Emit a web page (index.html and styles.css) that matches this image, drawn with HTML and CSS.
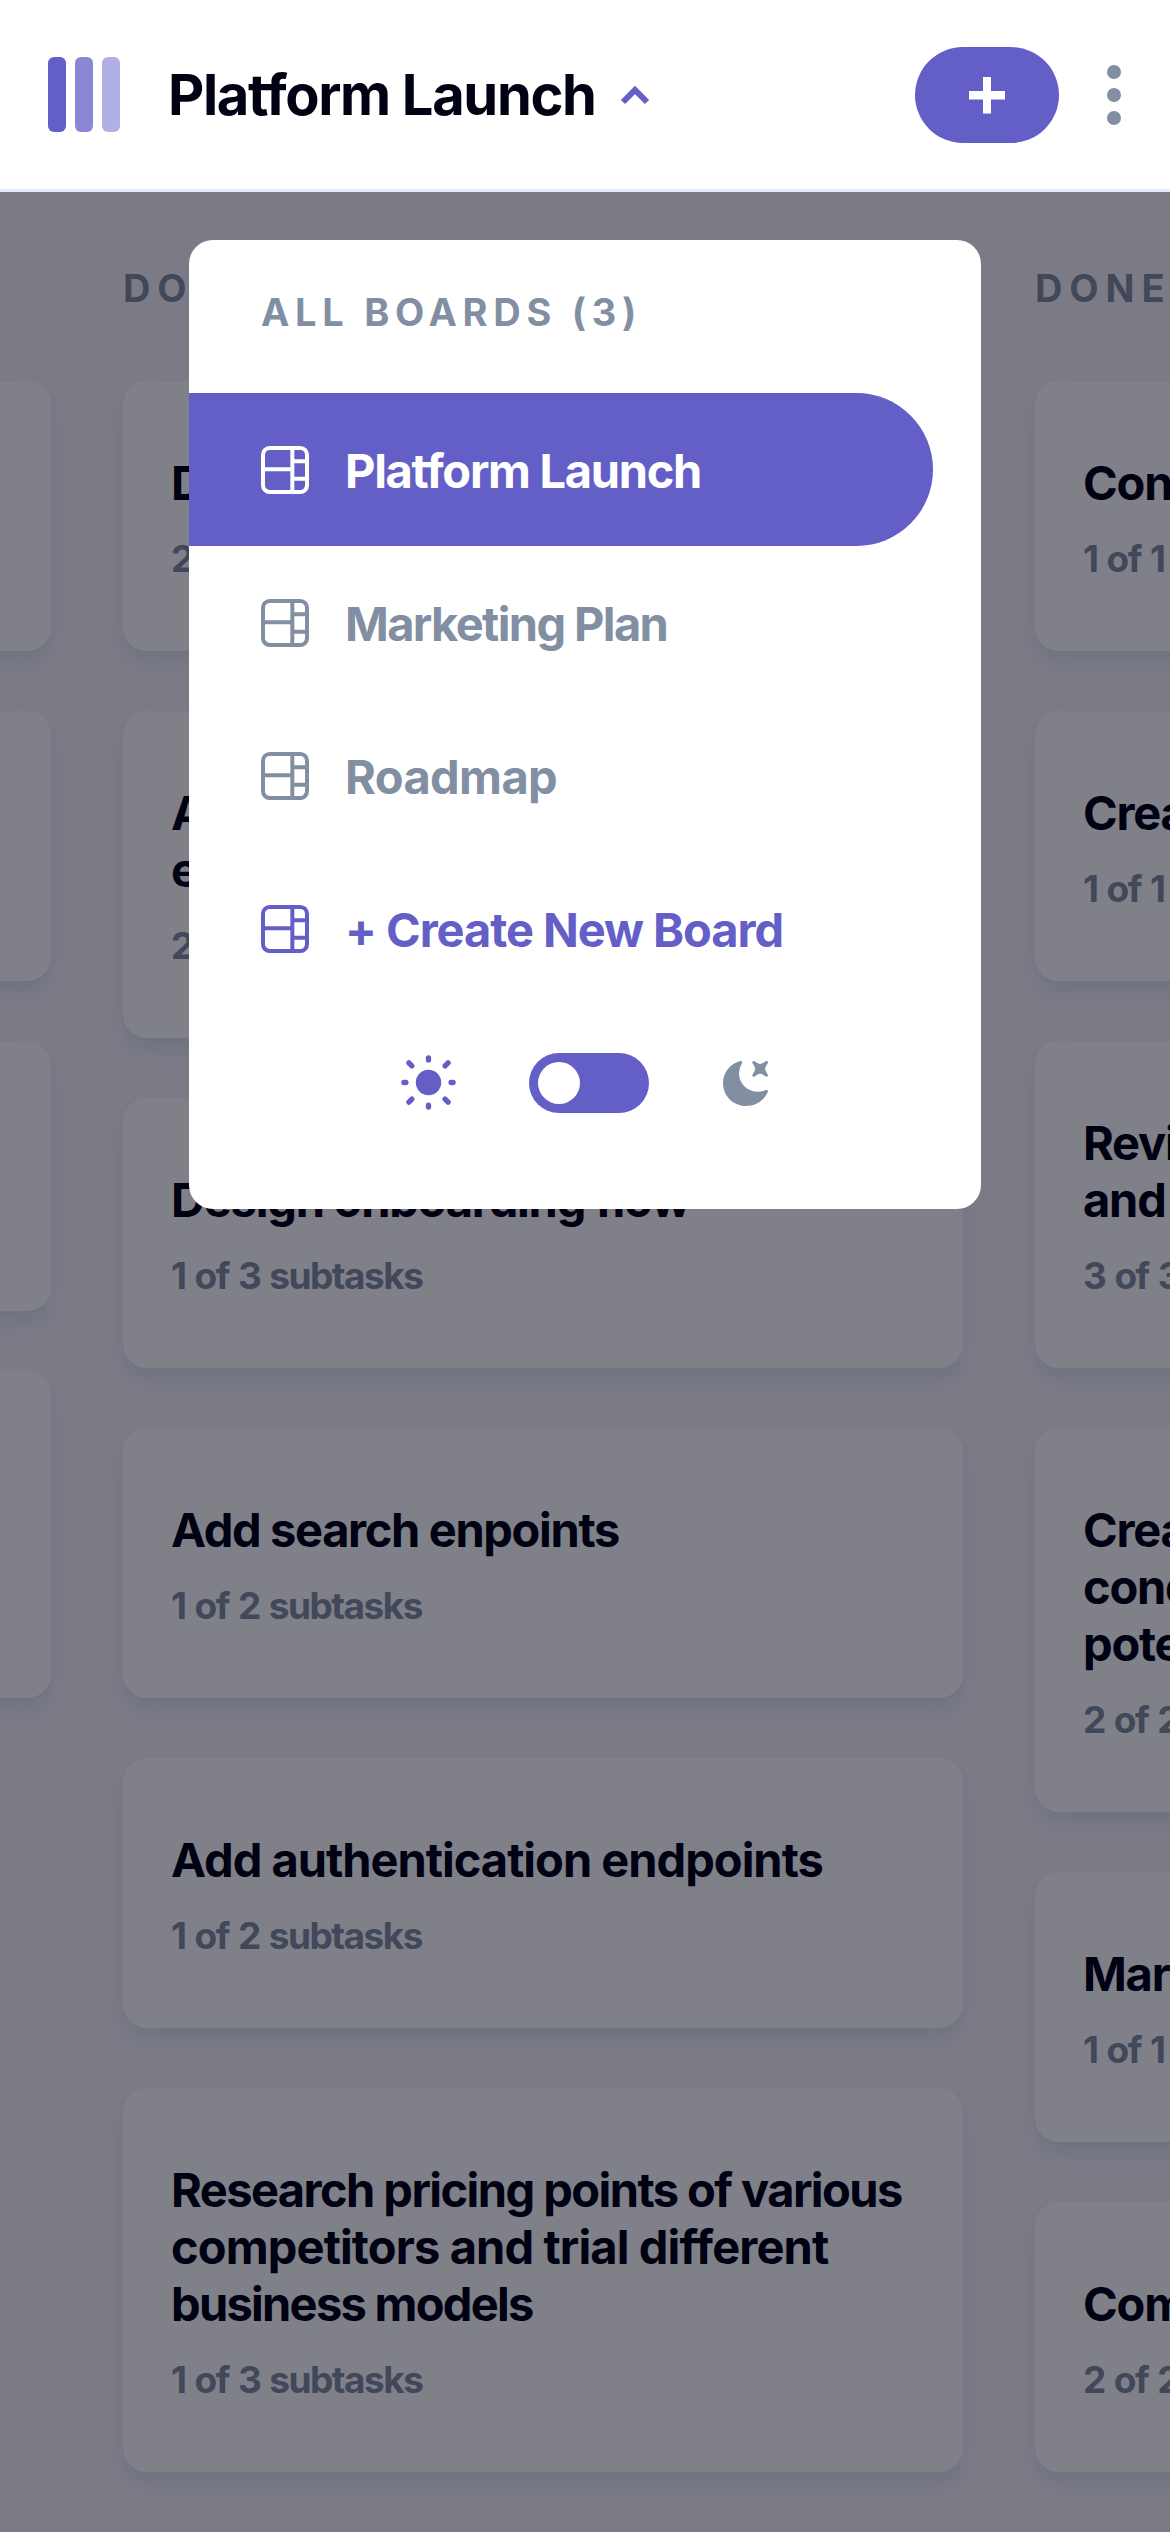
FILE: index.html
```html
<!DOCTYPE html>
<html lang="en">
<head>
<meta charset="utf-8">
<title>Platform Launch</title>
<link rel="stylesheet" href="styles.css">
</head>
<body>
<svg class="sprite" width="0" height="0">
  <symbol id="board-icon" viewBox="0 0 16 16"><path fill="currentColor" d="M0 2.889A2.889 2.889 0 0 1 2.889 0H13.11A2.889 2.889 0 0 1 16 2.889V13.11A2.888 2.888 0 0 1 13.111 16H2.89A2.889 2.889 0 0 1 0 13.111V2.89Zm1.333 5.555v4.667c0 .859.697 1.556 1.556 1.556h6.889V8.444H1.333Zm8.445-1.333V1.333h-6.89A1.556 1.556 0 0 0 1.334 2.89V7.11h8.445Zm4.889-1.333H11.11v4.444h3.556V5.778Zm0 5.778H11.11v3.11h2a1.556 1.556 0 0 0 1.556-1.555v-1.555Zm0-7.112V2.89a1.555 1.555 0 0 0-1.556-1.556h-2v3.111h3.556Z"/></symbol>
</svg>
<div class="app">
  <header class="header">
    <div class="logo"><i class="bar"></i><i class="bar bar-mid"></i><i class="bar bar-light"></i></div>
    <h1 class="title">Platform Launch</h1>
    <svg class="chevron" viewBox="0 0 10 7"><path d="M9 6 5 2 1 6" fill="none" stroke="#635FC7" stroke-width="2"/></svg>
    <button class="add" aria-label="Add task"><svg class="plus" viewBox="0 0 36 36"><path fill="#fff" d="M14 0h8v14h14v8.500H22V36.500h-8V22.500H0V14h14z"/></svg></button>
    <svg class="dots" viewBox="0 0 14 60"><g fill="#828FA3"><circle cx="7" cy="7" r="7"/><circle cx="7" cy="30" r="7"/><circle cx="7" cy="53" r="7"/></g></svg>
  </header>

  <main class="board">
    <section class="column">
      <h2 class="label"></h2>
      <article class="card short"></article>
      <article class="card short"></article>
      <article class="card short"></article>
      <article class="card tall"></article>
    </section>
    <section class="column">
      <h2 class="label">DOING (6)</h2>
      <article class="card"><h3 class="name">Design settings screen</h3><p class="sub">2 of 3 subtasks</p></article>
      <article class="card"><h3 class="name">Add account management<br>endpoints</h3><p class="sub">2 of 3 subtasks</p></article>
      <article class="card"><h3 class="name">Design onboarding flow</h3><p class="sub">1 of 3 subtasks</p></article>
      <article class="card"><h3 class="name tight">Add search enpoints</h3><p class="sub">1 of 2 subtasks</p></article>
      <article class="card"><h3 class="name loose">Add authentication endpoints</h3><p class="sub">1 of 2 subtasks</p></article>
      <article class="card"><h3 class="name"><span class="tighter">Research pricing points of various</span><br><span class="looser">competitors and trial different</span><br><span class="tightest">business models</span></h3><p class="sub">1 of 3 subtasks</p></article>
    </section>
    <section class="column">
      <h2 class="label">DONE (7)</h2>
      <article class="card"><h3 class="name">Conduct 5 wireframe tests</h3><p class="sub">1 of 1 subtasks</p></article>
      <article class="card"><h3 class="name">Create wireframe prototype</h3><p class="sub">1 of 1 subtasks</p></article>
      <article class="card"><h3 class="name">Review results of usability tests<br>and iterate</h3><p class="sub">3 of 3 subtasks</p></article>
      <article class="card"><h3 class="name">Create paper prototypes and<br>conduct 10 usability tests with<br>potential customers</h3><p class="sub">2 of 2 subtasks</p></article>
      <article class="card"><h3 class="name">Market discovery</h3><p class="sub">1 of 1 subtasks</p></article>
      <article class="card"><h3 class="name">Competitor analysis</h3><p class="sub">2 of 2 subtasks</p></article>
    </section>
  </main>

  <div class="overlay"></div>

  <nav class="menu">
    <h2 class="menu-label">ALL BOARDS (3)</h2>
    <a class="item active"><svg class="icon"><use href="#board-icon"/></svg><span class="text launch">Platform Launch</span></a>
    <a class="item"><svg class="icon"><use href="#board-icon"/></svg><span class="text marketing">Marketing Plan</span></a>
    <a class="item"><svg class="icon"><use href="#board-icon"/></svg><span class="text roadmap">Roadmap</span></a>
    <a class="item create"><svg class="icon"><use href="#board-icon"/></svg><span class="text new">+ Create New Board</span></a>
    <div class="theme">
      <svg class="sun" viewBox="-27.500 -27.500 55 55"><circle r="12.700" fill="#635FC7"/><g stroke="#635FC7" stroke-width="5.300" stroke-linecap="round"><path d="M0-24.600v2M0 24.600v-2M-24.600 0h2M24.600 0h-2M-19.600-19.600l3 3M19.600-19.600l-3 3M-19.600 19.600l3-3M19.600 19.600l-3-3"/></g></svg>
      <div class="switch"><div class="knob"></div></div>
      <svg class="moon" viewBox="0 0 16 16"><path fill="#828FA3" d="M6.474.682c.434-.11.718.406.481.78A6.067 6.067 0 0 0 6.010 4.720c0 3.418 2.827 6.187 6.314 6.187.89.002 1.770-.182 2.584-.54.408-.18.894.165.724.57-1.160 2.775-3.944 4.730-7.194 4.730-4.292 0-7.771-3.410-7.771-7.615 0-3.541 2.466-6.518 5.807-7.370Zm8.433.07c.442-.294.969.232.674.674l-.525.787a1.943 1.943 0 0 0 0 2.157l.525.788c.295.441-.232.968-.674.673l-.787-.525a1.943 1.943 0 0 0-2.157 0l-.786.525c-.442.295-.97-.232-.675-.673l.525-.788a1.943 1.943 0 0 0 0-2.157l-.525-.787c-.295-.442.232-.968.674-.673l.787.525a1.943 1.943 0 0 0 2.157 0l.787-.526Z"/></svg>
    </div>
  </nav>
</div>
</body>
</html>
```
FILE: styles.css
```css
* { box-sizing: border-box; margin: 0; padding: 0; }

body { font-family: Inter, "Liberation Sans", sans-serif; font-weight: 700; }

.sprite { position: absolute; }

.app {
  position: relative;
  width: 1170px;
  height: 2532px;
  overflow: hidden;
  background: #f6f5fb;
}

/* Header */
.header {
  display: flex;
  align-items: center;
  height: 192px;
  padding: 0 49px 0 48px;
  background: #fff;
  border-bottom: 3px solid #e4ebfa;
}
.logo { display: flex; gap: 9px; }
.bar { width: 18px; height: 75px; border-radius: 6px; background: #635fc7; }
.bar-mid { opacity: .75; }
.bar-light { opacity: .5; }
.title {
  width: 452px;
  margin-left: 48px;
  padding-top: 2px;
  font-size: 56px;
  line-height: 69px;
  letter-spacing: -1.320px;
  color: #000112;
  white-space: nowrap;
}
.chevron { width: 30px; height: 21px; }
.add {
  display: flex;
  align-items: center;
  justify-content: center;
  width: 144px;
  height: 96px;
  margin-left: auto;
  border: 0;
  border-radius: 48px;
  background: #635fc7;
}
.plus { width: 36px; height: 36px; overflow: visible; }
.dots { width: 14px; height: 60px; margin-left: 48px; }

/* Board */
.board { display: flex; gap: 72px; margin-left: -789px; padding-top: 74px; }
.column { display: flex; flex: none; flex-direction: column; gap: 60px; width: 840px; }
.label {
  height: 55px;
  font-size: 38px;
  line-height: 45px;
  letter-spacing: 6.900px;
  color: #828fa3;
}
.card {
  padding: 73px 0 70px 48px;
  border-radius: 24px;
  background: #fff;
  box-shadow: 0 12px 18px rgba(54, 78, 126, .1);
}
.short { height: 270px; }
.tall { height: 327px; }
.name {
  font-size: 47px;
  line-height: 57px;
  letter-spacing: -1.210px;
  color: #000112;
  white-space: nowrap;
}
.sub {
  margin-top: 25px;
  font-size: 37px;
  line-height: 45px;
  letter-spacing: -1.500px;
  word-spacing: 1.750px;
  color: #828fa3;
  white-space: nowrap;
}
.tight { letter-spacing: -1.340px; }
.loose { letter-spacing: -1px; }
.tighter { letter-spacing: -1.560px; }
.looser { letter-spacing: -.870px; }
.tightest { letter-spacing: -1.720px; }

.overlay { position: absolute; inset: 192px 0 0; background: rgba(0, 1, 18, .5); }

/* Boards menu */
.menu {
  position: absolute;
  top: 240px;
  left: 189px;
  width: 792px;
  height: 969px;
  padding-top: 50px;
  border-radius: 24px;
  background: #fff;
  color: #828fa3;
}
.menu-label {
  height: 103px;
  padding-left: 72px;
  font-size: 38px;
  line-height: 45px;
  letter-spacing: 5.720px;
}
.item {
  display: flex;
  align-items: center;
  gap: 36px;
  width: 744px;
  height: 153px;
  padding-left: 72px;
}
.icon { width: 48px; height: 48px; }
.text { padding-top: 2px; font-size: 47px; line-height: 57px; white-space: nowrap; }
.active { border-radius: 0 77px 77px 0; background: #635fc7; color: #fff; }
.create { color: #635fc7; }
.launch { letter-spacing: -1.300px; }
.marketing { letter-spacing: -1.620px; }
.roadmap { letter-spacing: -.600px; }
.new { letter-spacing: -1.050px; }

.theme { display: flex; align-items: center; padding: 48px 0 0 212px; }
.sun { width: 55px; height: 55px; margin-bottom: 2px; }
.switch { width: 120px; height: 60px; margin: 0 72px 0 73px; padding: 9px; border-radius: 30px; background: #635fc7; }
.knob { width: 42px; height: 42px; border-radius: 50%; background: #fff; }
.moon { width: 48px; height: 48px; }
```
